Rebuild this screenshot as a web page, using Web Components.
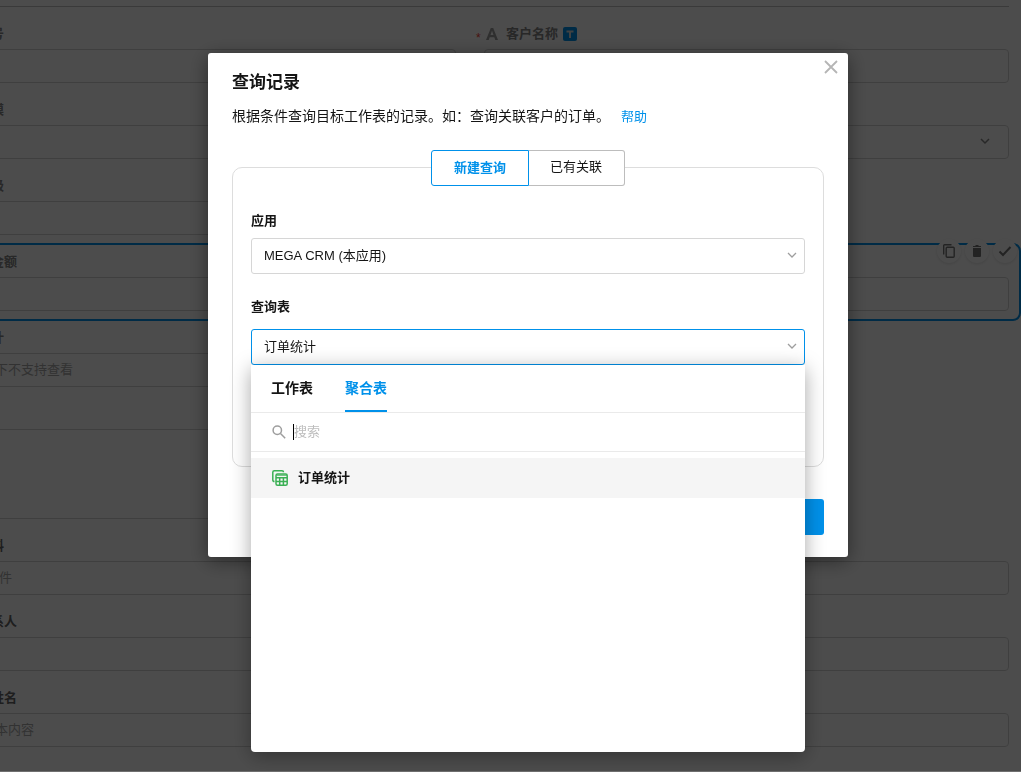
<!DOCTYPE html>
<html lang="zh-CN">
<head>
<meta charset="utf-8">
<title>查询记录</title>
<style>
html, body { margin: 0; height: 100%; overflow: hidden; background: #fff; }
body { font: 13px/20px "Liberation Sans", "Noto Sans CJK SC", sans-serif; color: #151515; }
</style>
</head>
<body>
<record-form>
  <form-field label="号"></form-field>
  <form-field label="客户名称" kind="title"></form-field>
  <form-field label="模"></form-field>
  <form-field label-hidden="选项" kind="select"></form-field>
  <form-field label="级"></form-field>
  <form-field label="金额" class="wide" kind="active"></form-field>
  <form-field label="计" hint="下不支持查看"></form-field>
  <form-field label-hidden="备注" kind="tall"></form-field>
  <form-field label="料" hint="件" class="wide dark" kind="file"></form-field>
  <form-field label="系人" class="wide dark"></form-field>
  <form-field label="姓名" hint="本内容" class="wide dark"></form-field>
</record-form>
<modal-layer>
  <query-dialog>
    <query-select label="应用" value="MEGA CRM (本应用)"></query-select>
    <query-select class="second" label="查询表" value="订单统计" open>
      <table-picker></table-picker>
    </query-select>
  </query-dialog>
</modal-layer>

<script>
const define = (name, render) => customElements.define(name, class extends HTMLElement {
  connectedCallback() {
    if (this.shadowRoot) return;
    this.attachShadow({ mode: 'open' }).innerHTML = render(this);
  }
});

define('record-form', () => `
<style>
:host { display: grid; grid-template-columns: 477fr 525fr; column-gap: 28px;
  margin: 6px 12px 0 -21px; border-top: 1px solid #c4c4c4; }
::slotted(form-field) { grid-column-start: 1; }
::slotted(.wide) { grid-column: 1 / -1; }
::slotted([kind="title"]), ::slotted([kind="select"]) { grid-column-start: 2; }
</style>
<slot></slot>`);

define('form-field', el => {
  const kind = el.getAttribute('kind');
  const label = el.getAttribute('label') || '';
  const aria = label ? '' : `aria-label="${el.getAttribute('label-hidden')}"`;
  const hint = el.getAttribute('hint') || '';
  const control = kind === 'select' ? `<select id="c" ${aria}><option></option></select>
      <svg class="chev" width="10" height="7" viewBox="0 0 10 7"><path d="m1 1 4 4 4-4" fill="none" stroke="#858585" stroke-width="1.500"/></svg>`
    : kind === 'tall' ? `<textarea id="c" ${aria}></textarea>`
    : `<input id="c" ${aria} placeholder="${hint}">`;
  return `
<style>
:host { display: block; position: relative; padding-top: 17px; --label: #858585; }
:host(.dark) { --label: #666; }
.head { display: flex; align-items: center; height: 20px; margin-bottom: 5px; padding-left: 12px; }
label { color: var(--label); font-weight: 700; }
.box { position: relative; }
input, select, textarea { display: block; box-sizing: border-box; width: 100%; height: 34px; margin: 0;
  padding: 0 15px 2px; border: 1px solid #d4d4d4; border-radius: 4px; background: #fff; font: inherit;
  appearance: none; outline: 0; resize: none; }
textarea { height: 90px; }
:host([kind="file"]) input { padding-left: 19px; }
::placeholder { color: #a8a8a8; opacity: 1; }
.chev { position: absolute; right: 19px; top: 13px; }
:host([kind="title"]) .head { padding-left: 0; margin-left: -8px; }
.star { width: 8px; color: #f44336; line-height: 24px; height: 16px; font-size: 12px; }
.type { width: 22px; height: 14px; }
.tag { margin-left: 5px; }
.ring { position: absolute; inset: 8px -12px -10px -12px; border: 2px solid #0091ea; border-radius: 8px; pointer-events: none; }
.tools { position: absolute; right: -8px; top: 4px; display: flex; gap: 4px; }
.tools button { display: grid; place-items: center; width: 24px; height: 24px; padding: 0; border: 0;
  border-radius: 50%; background: #fff; box-shadow: 0 1px 3px rgba(0,0,0,.12); }
</style>
<div class="head">${kind === 'title' ? `<span class="star">*</span>
  <svg class="type" viewBox="0 0 22 14"><path d="M2 13 6.800 1h2.400L14 13h-2.700l-1-2.800H5.700l-1 2.800zM6.500 8h3L8 3.800z" fill="#9e9e9e"/></svg>` : ''}
  <label for="c">${label}</label>
  ${kind === 'title' ? `<svg class="tag" width="14" height="14" viewBox="0 0 14 14"><rect width="14" height="14" rx="2" fill="#0091ea"/><path d="M3.500 4.500h7M7 4.500V11" stroke="#ddd" stroke-width="2"/></svg>` : ''}
</div>
${kind === 'active' ? '<div class="ring"></div>' : ''}
<div class="box">${control}</div>
${kind === 'active' ? `<div class="tools">
  <button type="button" aria-label="复制"><svg width="12" height="14" viewBox="0 0 12 14" fill="none" stroke="#757575" stroke-width="1.400"><path d="M.7 10.500V1.500Q.7.7 1.500.7H8.500"/><rect x="3.200" y="3.200" width="8" height="10" rx="1"/></svg></button>
  <button type="button" aria-label="删除"><svg width="10" height="12" viewBox="0 0 10 12" fill="#757575"><path d="M1 3h8v8q0 1-1 1H2q-1 0-1-1zM1 1h2l1-1h2l1 1h2v1H1z"/></svg></button>
  <button type="button" aria-label="完成"><svg width="14" height="12" viewBox="0 0 14 12"><path d="m1.500 6.500 3.500 3.500L12.500 2" fill="none" stroke="#757575" stroke-width="2"/></svg></button>
</div>` : ''}`;
});

define('modal-layer', () => `
<style>
:host { position: fixed; inset: 0; z-index: 10; display: flex; justify-content: center; align-items: flex-start;
  padding: 53px 0 0 35px; background: rgba(0,0,0,.7); border-bottom: 1px solid rgba(255,255,255,.2); }
</style>
<slot></slot>`);

define('query-dialog', () => `
<style>
:host { display: block; box-sizing: border-box; width: 640px; max-width: 100%; padding: 18px 24px 22px;
  position: relative; background: #fff; border-radius: 3px; box-shadow: 0 4px 20px rgba(0,0,0,.45); }
h1 { margin: 0; font-size: 17px; line-height: 24px; font-weight: 700; }
p { margin: 10px 0 0; font-size: 14px; line-height: 22px; }
a { margin-left: 11px; font-size: 13px; color: #0091ea; text-decoration: none; }
.close { position: absolute; top: 7px; right: 10px; display: block; padding: 0; border: 0; background: none; }
.close svg { display: block; }
.modes { position: relative; display: flex; justify-content: center; margin: 22px 0 -19px; }
.modes button { box-sizing: border-box; height: 36px; padding: 0 22px 2px 21px; border: 1px solid #bdbdbd; border-left: 0;
  border-radius: 0 3px 3px 0; background: #fff; font: inherit; color: inherit; }
.modes .on { padding: 0 22px; border: 1px solid #0091ea; border-radius: 3px 0 0 3px; color: #0091ea; font-weight: 700; }
.group { padding: 43px 18px 101px; border: 1px solid #ddd; border-radius: 10px; }
footer { display: flex; justify-content: flex-end; margin-top: 32px; }
.ok { width: 80px; height: 36px; border: 0; border-radius: 3px; background: #0091ea; }
</style>
<h1>查询记录</h1>
<button class="close" type="button" aria-label="关闭"><svg width="14" height="14" viewBox="0 0 14 14"><path d="m1 1 12 12M13 1 1 13" stroke="#b5b5b5" stroke-width="1.800" fill="none"/></svg></button>
<p>根据条件查询目标工作表的记录。如：查询关联客户的订单。<a href="#">帮助</a></p>
<div class="modes"><button class="on" type="button">新建查询</button><button type="button">已有关联</button></div>
<div class="group"><slot></slot></div>
<footer><button class="ok" type="button" aria-label="确定"></button></footer>`);

define('query-select', el => `
<style>
:host { display: block; }
:host(.second) { margin-top: 23px; --gap: 12px; }
label { display: block; margin-bottom: var(--gap, 7px); font-weight: 700; }
.box { position: relative; }
select { display: block; box-sizing: border-box; width: 100%; height: 36px; margin: 0; padding: 0 36px 1px 12px;
  border: 1px solid #d6d6d6; border-radius: 3px; background: #fff; color: inherit; font: inherit; appearance: none; outline: 0; }
:host([open]) select { border-color: #0091ea; }
svg { position: absolute; right: 8px; top: 14px; pointer-events: none; }
</style>
<label for="s">${el.getAttribute('label')}</label>
<div class="box">
  <select id="s"><option>${el.getAttribute('value')}</option></select>
  <svg width="10" height="7" viewBox="0 0 10 7"><path d="m1 1 4 4 4-4" fill="none" stroke="#9e9e9e" stroke-width="1.300"/></svg>
  <slot></slot>
</div>`);

define('table-picker', () => `
<style>
:host { position: absolute; top: 100%; left: 0; right: 0; z-index: 2; box-sizing: border-box; min-height: 387px;
  background: #fff; border-radius: 0 0 4px 4px; box-shadow: 0 4px 20px rgba(0,0,0,.35); }
nav { display: flex; gap: 32px; padding: 0 20px; border-bottom: 1px solid #eaeaea; }
nav button { height: 47px; padding: 0; border: 0; border-bottom: 2px solid transparent; background: none;
  font: inherit; font-size: 14px; font-weight: 700; color: inherit; }
nav .on { color: #0091ea; border-color: #0091ea; }
.search { display: flex; align-items: center; gap: 7px; height: 38px; padding: 0 21px; border-bottom: 1px solid #eaeaea; }
input { flex: 1; min-width: 0; padding: 0; border: 0; outline: 0; background: none; font: inherit; }
.caret { width: 1px; height: 16px; margin-right: -7px; background: #000; }
::placeholder { color: #bdbdbd; opacity: 1; }
ul { margin: 6px 0; padding: 0; list-style: none; }
li { display: flex; align-items: center; gap: 10px; height: 40px; padding: 0 21px; background: #f5f5f5; font-weight: 700; }
</style>
<nav><button type="button">工作表</button><button class="on" type="button">聚合表</button></nav>
<div class="search">
  <svg width="14" height="14" viewBox="0 0 14 14" fill="none" stroke="#9e9e9e" stroke-width="1.500"><circle cx="5.300" cy="5.300" r="4.200"/><path d="m8.500 8.500 4.700 4.700"/></svg>
  <span class="caret"></span>
  <input aria-label="搜索" placeholder="搜索">
</div>
<ul><li>
  <svg width="16" height="16" viewBox="0 0 16 16" fill="none" stroke="#3bb054" stroke-width="1.500"><path d="M2.500 11.500Q.8 11.500.8 10V2.300Q.8.8 2.300.8H10q1.500 0 1.500 1.500"/><rect x="4" y="4" width="11.200" height="11.200" rx="1.500"/><path d="M4 7.800h11M4 11.500h11M7.700 7.500V15M11.400 7.500V15"/><path d="M4.500 5.200h10.500" stroke-width="1"/></svg>
  <span>订单统计</span>
</li></ul>`);
</script>
</body>
</html>
